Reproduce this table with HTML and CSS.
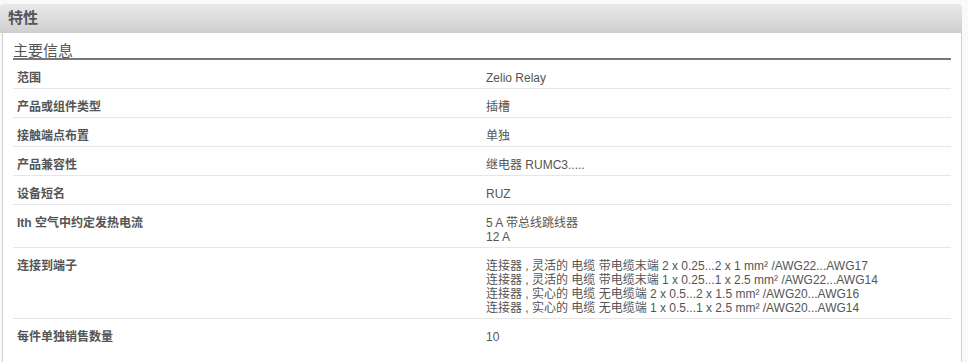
FILE: index.html
```html
<!DOCTYPE html>
<html lang="zh-CN">
<head>
<meta charset="utf-8">
<link rel="stylesheet" href="styles.css">
</head>
<body>
<div class="panel">
  <div class="panel-head">特性</div>
  <div class="panel-body">
    <h3 class="section-title">主要信息</h3>
    <div class="row"><div class="label"><div class="ln">范围</div></div><div class="value"><div class="ln">Zelio Relay</div></div></div>
    <div class="row"><div class="label"><div class="ln">产品或组件类型</div></div><div class="value"><div class="ln">插槽</div></div></div>
    <div class="row"><div class="label"><div class="ln">接触端点布置</div></div><div class="value"><div class="ln">单独</div></div></div>
    <div class="row"><div class="label"><div class="ln">产品兼容性</div></div><div class="value"><div class="ln">继电器 RUMC3.....</div></div></div>
    <div class="row"><div class="label"><div class="ln">设备短名</div></div><div class="value"><div class="ln">RUZ</div></div></div>
    <div class="row"><div class="label"><div class="ln">Ith 空气中约定发热电流</div></div><div class="value"><div class="ln">5 A 带总线跳线器</div><div class="ln">12 A</div></div></div>
    <div class="row"><div class="label"><div class="ln">连接到端子</div></div><div class="value"><div class="ln">连接器 , 灵活的 电缆 带电缆末端 2 x 0.25...2 x 1 mm² /AWG22...AWG17</div><div class="ln">连接器 , 灵活的 电缆 带电缆末端 1 x 0.25...1 x 2.5 mm² /AWG22...AWG14</div><div class="ln">连接器 , 实心的 电缆 无电缆端 2 x 0.5...2 x 1.5 mm² /AWG20...AWG16</div><div class="ln">连接器 , 实心的 电缆 无电缆端 1 x 0.5...1 x 2.5 mm² /AWG20...AWG14</div></div></div>
    <div class="row last"><div class="label"><div class="ln">每件单独销售数量</div></div><div class="value"><div class="ln">10</div></div></div>
  </div>
</div>
</body>
</html>
```
FILE: styles.css
```css
html, body {
  margin: 0;
  padding: 0;
  background: #f9f9f9;
  font-family: "Liberation Sans", "Noto Sans CJK SC", sans-serif;
  color: #555;
}
.panel {
  width: 962px;
  padding-top: 4px;
}
.panel-head {
  height: 29px;
  box-sizing: border-box;
  padding: 5px 0 0 8px;
  font-size: 15px;
  font-weight: bold;
  color: #555;
  background: linear-gradient(#e9e9e9, #cfcfcf);
  border-radius: 4px 4px 0 0;
  line-height: 18px;
}
.panel-body {
  margin-left: 2px;
  border-left: 1px solid #cfcfcf;
  border-right: 1px solid #cfcfcf;
  background: #fff;
  padding: 0 10px 0 10px;
  height: 329px;
}
.section-title {
  margin: 0;
  height: 27px;
  box-sizing: border-box;
  padding-top: 8px;
  font-size: 15px;
  font-weight: normal;
  line-height: 19px;
  overflow: hidden;
  color: #555;
  border-bottom: 2px solid #777;
}
.row {
  display: flex;
  border-bottom: 1px solid #e6e6e6;
  padding: 11px 0 3px 0;
  font-size: 12px;
}
.row.last { border-bottom: none; }
.ln {
  height: 14px;
  line-height: 14px;
  white-space: nowrap;
}
.label {
  width: 469px;
  padding-left: 4px;
  font-weight: bold;
  color: #555;
}
.value {
  color: #555;
}
```
